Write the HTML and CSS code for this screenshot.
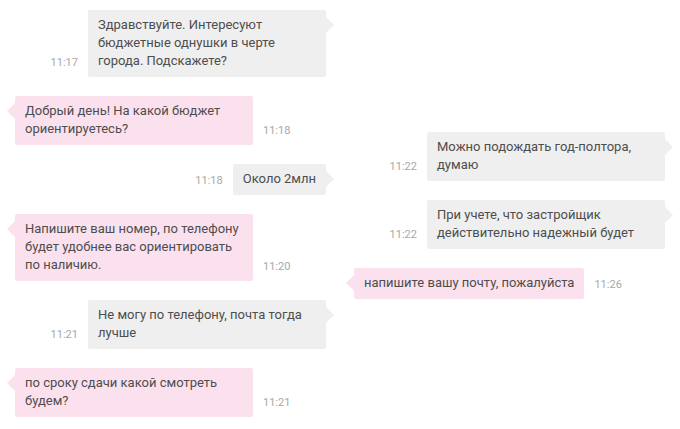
FILE: index.html
```html
<!DOCTYPE html>
<html lang="ru">

<head>
    <meta charset="UTF-8">
    <meta name="viewport" content="width=device-width, initial-scale=1.0">
    <title>Чат</title>
    <link rel="stylesheet" href="styles.css">
</head>

<body>
    <div class="chat">
        <!-- Left column -->
        <div class="column">
            <div class="row out">
                <span class="time">11:17</span>
                <div class="bubble">Здравствуйте. Интересуют бюджетные однушки в черте города. Подскажете?</div>
            </div>
            <div class="row in">
                <div class="bubble">Добрый день! На какой бюджет ориентируетесь?</div>
                <span class="time">11:18</span>
            </div>
            <div class="row out">
                <span class="time">11:18</span>
                <div class="bubble">Около 2млн</div>
            </div>
            <div class="row in">
                <div class="bubble">Напишите ваш номер, по телефону будет удобнее вас ориентировать по наличию.</div>
                <span class="time">11:20</span>
            </div>
            <div class="row out">
                <span class="time">11:21</span>
                <div class="bubble">Не могу по телефону, почта тогда лучше</div>
            </div>
            <div class="row in">
                <div class="bubble">по сроку сдачи какой смотреть будем?</div>
                <span class="time">11:21</span>
            </div>
        </div>

        <!-- Right column -->
        <div class="column column-right">
            <div class="row out">
                <span class="time">11:22</span>
                <div class="bubble">Можно подождать год-полтора, думаю</div>
            </div>
            <div class="row out">
                <span class="time">11:22</span>
                <div class="bubble">При учете, что застройщик действительно надежный будет</div>
            </div>
            <div class="row in">
                <div class="bubble">напишите вашу почту, пожалуйста</div>
                <span class="time">11:26</span>
            </div>
        </div>
    </div>
</body>

</html>
```

FILE: styles.css
```css
/* Reset and Global Styles */
* {
    margin: 0;
    padding: 0;
    box-sizing: border-box;
}

body {
    font-family: Roboto, "Liberation Sans", sans-serif;
    font-size: 13px;
    color: #4d4d4d;
    background-color: #fff;
}

/* Two columns of messages */
.chat {
    display: grid;
    grid-template-columns: 340px 340px;
}

.column {
    display: flex;
    flex-direction: column;
    gap: 19px;
    padding: 10px 14px 0 15px;
}

.column-right {
    padding-top: 132px;
    padding-left: 14px;
    padding-right: 15px;
}

/* Message rows */
.row {
    display: flex;
    align-items: flex-end;
    gap: 10px;
}

.row.out {
    justify-content: flex-end;
}

.row.in {
    justify-content: flex-start;
}

.bubble {
    position: relative;
    max-width: 238px;
    padding: 6px 10px 7px;
    line-height: 18px;
    border-radius: 2px;
}

.out .bubble {
    background-color: #efefef;
}

.in .bubble {
    background-color: #fbe1ee;
}

/* Bubble tails */
.bubble::after {
    content: "";
    position: absolute;
    top: 7px;
    border-top: 8px solid transparent;
    border-bottom: 8px solid transparent;
}

.out .bubble::after {
    right: -8px;
    border-left: 8px solid #efefef;
}

.in .bubble::after {
    left: -8px;
    border-right: 8px solid #fbe1ee;
}

.time {
    font-size: 11px;
    line-height: 18px;
    color: #a8a8a8;
    padding-bottom: 5px;
}
```
